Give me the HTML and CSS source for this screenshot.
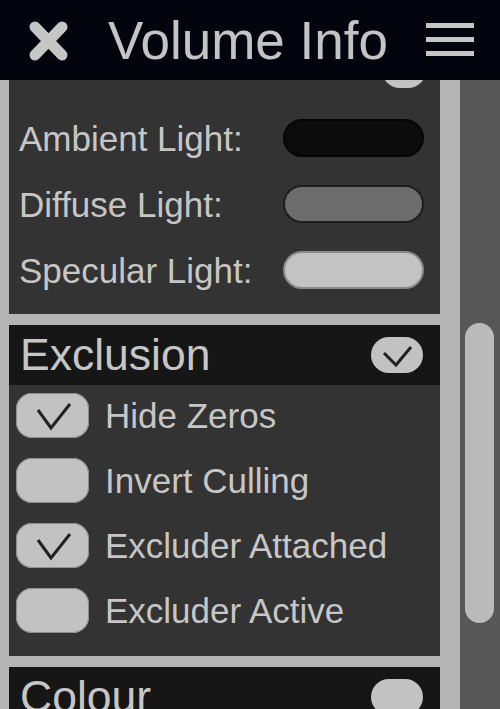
FILE: index.html
```html
<!DOCTYPE html>
<html>
<head>
<meta charset="utf-8">
<link rel="stylesheet" href="styles.css">
</head>
<body>
<header class="topbar">
  <svg class="close-icon" width="41" height="40" viewBox="0 0 41 40">
    <path d="M7 6 L34 34 M34 6 L7 34" stroke="#c6c6c6" stroke-width="11" stroke-linecap="round"/>
  </svg>
  <h1 class="title">Volume Info</h1>
  <div class="menu-icon"><span></span><span></span><span></span></div>
</header>
<div class="content">
  <div class="panels">
    <section class="panel panel-light">
      <div class="stub"><div class="toggle"></div></div>
      <div class="row">
        <span class="label">Ambient Light:</span>
        <span class="pill pill-black"></span>
      </div>
      <div class="row">
        <span class="label">Diffuse Light:</span>
        <span class="pill pill-grey"></span>
      </div>
      <div class="row">
        <span class="label">Specular Light:</span>
        <span class="pill pill-white"></span>
      </div>
    </section>
    <section class="panel">
      <div class="panel-head">
        <span class="head-title">Exclusion</span>
        <span class="toggle">
          <svg width="52" height="36" viewBox="0 0 52 36"><path d="M13 16 L25 28 L40 10" fill="none" stroke="#222" stroke-width="3"/></svg>
        </span>
      </div>
      <div class="panel-body">
        <div class="check-row">
          <span class="checkbox"><svg width="73" height="45" viewBox="0 0 73 45"><path d="M22 17 L35 35 L54 11" fill="none" stroke="#222" stroke-width="3"/></svg></span>
          <span class="label">Hide Zeros</span>
        </div>
        <div class="check-row">
          <span class="checkbox"></span>
          <span class="label">Invert Culling</span>
        </div>
        <div class="check-row">
          <span class="checkbox"><svg width="73" height="45" viewBox="0 0 73 45"><path d="M22 17 L35 35 L54 11" fill="none" stroke="#222" stroke-width="3"/></svg></span>
          <span class="label">Excluder Attached</span>
        </div>
        <div class="check-row">
          <span class="checkbox"></span>
          <span class="label">Excluder Active</span>
        </div>
      </div>
    </section>
    <section class="panel">
      <div class="panel-head">
        <span class="head-title">Colour</span>
        <span class="toggle"></span>
      </div>
    </section>
  </div>
  <div class="track">
    <div class="thumb"></div>
  </div>
</div>
</body>
</html>
```

FILE: styles.css
```css
html, body {
  margin: 0;
  padding: 0;
}
body {
  width: 500px;
  height: 709px;
  overflow: hidden;
  background: #b4b4b4;
  font-family: "Liberation Sans", Arial, sans-serif;
  color: #c6c6c6;
}
.topbar {
  height: 80px;
  background: #04040f;
  display: flex;
  align-items: center;
  padding-left: 28px;
  box-sizing: border-box;
}
.close-icon {
  flex: none;
  margin-top: 1px;
}
.title {
  margin: 0 0 0 39px;
  font-weight: normal;
  font-size: 53px;
  line-height: 1;
  color: #c4c4c4;
  flex: 1;
}
.menu-icon {
  width: 48px;
  display: flex;
  flex-direction: column;
  gap: 9px;
  margin-right: 26px;
  margin-top: -2px;
}
.menu-icon span {
  display: block;
  height: 5px;
  background: #c6c6c6;
}
.content {
  display: flex;
  height: 629px;
}
.panels {
  width: 431px;
  margin-left: 9px;
  display: flex;
  flex-direction: column;
  gap: 11px;
}
.panel {
  background: #333333;
  flex: none;
}
.panel-light {
  height: 234px;
  display: flex;
  flex-direction: column;
}
.stub {
  height: 8px;
  overflow: hidden;
  display: flex;
  justify-content: flex-end;
  padding-right: 14px;
  margin-bottom: 17px;
}
.stub .toggle {
  margin-top: -28px;
  width: 44px;
}
.row {
  height: 66px;
  display: flex;
  align-items: center;
  justify-content: space-between;
  padding: 0 16px 0 10px;
}
.label {
  font-size: 35px;
  line-height: 1;
  color: #c6c6c6;
}
.pill {
  width: 141px;
  height: 38px;
  border-radius: 19px;
  box-sizing: border-box;
}
.pill-black {
  background: #0c0c0c;
  border: 2px solid #050505;
}
.pill-grey {
  background: #6d6d6d;
  border: 2px solid #1e1e1e;
}
.pill-white {
  background: #c3c3c3;
  border: 2px solid #8a8a8a;
}
.panel-head {
  height: 60px;
  background: #161616;
  display: flex;
  align-items: center;
  justify-content: space-between;
  padding: 0 17px 0 11px;
}
.head-title {
  font-size: 44.5px;
  line-height: 1;
  color: #c6c6c6;
}
.toggle {
  display: block;
  width: 52px;
  height: 36px;
  border-radius: 18px;
  background: #c2c2c2;
  flex: none;
}
.toggle svg, .checkbox svg {
  display: block;
}
.panel-body {
  height: 271px;
  display: flex;
  flex-direction: column;
  gap: 4px;
  box-sizing: border-box;
}
.check-row {
  height: 61px;
  display: flex;
  align-items: center;
  padding-left: 7px;
  gap: 16px;
}
.checkbox {
  width: 73px;
  height: 45px;
  border-radius: 16px;
  background: #c2c2c2;
  box-shadow: inset 0 0 0 1px #8e8e8e;
  flex: none;
}
.track {
  margin-left: 20px;
  width: 40px;
  background: #575757;
  padding-top: 243px;
  box-sizing: border-box;
}
.thumb {
  margin-left: 5px;
  width: 29px;
  height: 300px;
  border-radius: 15px;
  background: #bababa;
}
```
